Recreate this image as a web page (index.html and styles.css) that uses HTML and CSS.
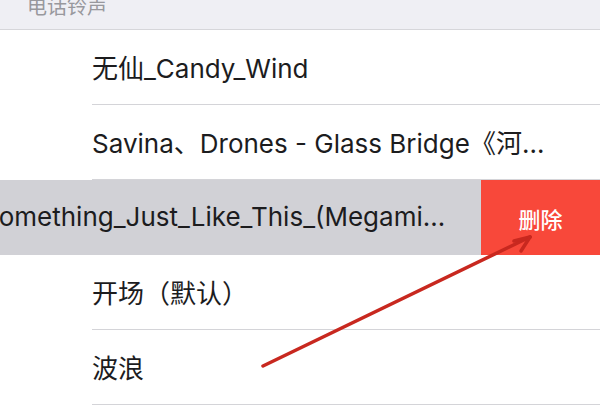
FILE: index.html
```html
<!DOCTYPE html>
<html lang="zh-CN">
<head>
    <meta charset="UTF-8">
    <meta name="viewport" content="width=device-width, initial-scale=1.0">
    <title>电话铃声</title>
    <link rel="stylesheet" href="styles.css">
</head>
<body>
    <div class="screen">
        <div class="section-header">
            <span class="section-title">电话铃声</span>
        </div>

        <ul class="tone-list">
            <li class="tone">
                <span class="tone-name">无仙_Candy_Wind</span>
            </li>
            <li class="tone">
                <span class="tone-name">Savina、Drones - Glass Bridge《河流之声》</span>
            </li>
            <li class="tone swiped">
                <span class="tone-name">Something_Just_Like_This_(Megamix_Remix)</span>
                <button class="delete-btn" type="button">删除</button>
            </li>
            <li class="tone">
                <span class="tone-name">开场（默认）</span>
            </li>
            <li class="tone">
                <span class="tone-name">波浪</span>
            </li>
        </ul>

        <!-- red annotation arrow pointing at the delete button -->
        <svg class="arrow" width="600" height="418" viewBox="0 0 600 418">
            <g stroke="#c8281f" stroke-width="3.5" stroke-linecap="round" fill="none">
                <line x1="263" y1="366" x2="530" y2="237"/>
                <line x1="530" y1="237" x2="514" y2="241"/>
                <line x1="530" y1="237" x2="521" y2="251"/>
            </g>
        </svg>
    </div>
</body>
</html>
```

FILE: styles.css
```css
/* iOS style ringtone list */
* {
    box-sizing: border-box;
}

body {
    margin: 0;
    font-family: Inter, "Noto Sans CJK SC", sans-serif;
    background-color: #fff;
}

.screen {
    position: relative;
    width: 600px;
    height: 418px;
    overflow: hidden;
}

.section-header {
    height: 30px;
    padding-left: 27px;
    background-color: #efeff4; /* grouped table background */
    border-bottom: 1px solid #d6d6da;
    overflow: hidden;
}

.section-title {
    display: block;
    margin-top: -4px;
    color: #98989d;
    font-family: "Noto Sans CJK SC", sans-serif;
    font-size: 20px;
    line-height: 20px;
}

.tone-list {
    list-style: none;
    margin: 0;
    padding: 0;
}

.tone {
    position: relative;
    display: flex;
    align-items: center;
    height: 75px;
    padding-left: 92px;
    padding-bottom: 2px;
    font-size: 26px;
    color: #1c1c1e;
}

/* inset separator */
.tone::after {
    content: "";
    position: absolute;
    left: 92px;
    right: 0;
    bottom: 0;
    height: 1px;
    background-color: #d4d4d8;
}

.tone-name {
    width: 458px;
    white-space: nowrap;
    overflow: hidden;
    text-overflow: ellipsis;
}

.tone.swiped {
    padding-left: 0;
    background-color: #d1d1d6;
}

.tone.swiped::after {
    display: none;
}

.tone.swiped .tone-name {
    flex: none;
    width: 469px;
    margin-left: -18px;
}

.delete-btn {
    flex: none;
    align-self: stretch;
    width: 119px;
    margin-left: auto;
    margin-bottom: -2px;
    border: none;
    background-color: #f8483a; /* iOS red */
    color: #fff;
    font-family: "Noto Sans CJK SC", sans-serif;
    font-size: 22px;
    font-weight: 500;
}

.arrow {
    position: absolute;
    left: 0;
    top: 0;
    pointer-events: none;
}
```
